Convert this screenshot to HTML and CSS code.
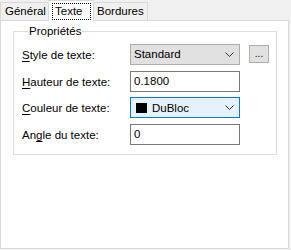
FILE: index.html
```html
<!DOCTYPE html>
<html lang="fr">
<head>
<meta charset="utf-8">
<link rel="stylesheet" href="styles.css">
</head>
<body>
<div class="tabs">
  <div class="tab first">Général</div>
  <div class="tab active"><span class="focus">Texte</span></div>
  <div class="tab last">Bordures</div>
</div>
<div class="panel">
  <fieldset class="group">
    <legend>Propriétés</legend>
    <div class="form">
      <label class="lbl r1"><u>S</u>tyle de texte:</label>
      <div class="ctl r1">
        <div class="combo"><span>Standard</span><svg class="chev" width="9" height="5" viewBox="0 0 9 5"><path d="M0.5 0.5 L4.5 4.5 L8.5 0.5" fill="none" stroke="#333" stroke-width="1"/></svg></div>
        <div class="btn">...</div>
      </div>
      <label class="lbl r2"><u>H</u>auteur de texte:</label>
      <div class="ctl r2"><div class="text">0.1800</div></div>
      <label class="lbl r3"><u>C</u>ouleur de texte:</label>
      <div class="ctl r3">
        <div class="combo focused"><span class="sw"></span><span>DuBloc</span><svg class="chev" width="9" height="5" viewBox="0 0 9 5"><path d="M0.5 0.5 L4.5 4.5 L8.5 0.5" fill="none" stroke="#333" stroke-width="1"/></svg></div>
      </div>
      <label class="lbl r4">An<u>g</u>le du texte:</label>
      <div class="ctl r4"><div class="text">0</div></div>
    </div>
  </fieldset>
</div>
</body>
</html>
```

FILE: styles.css
```css
* { box-sizing: border-box; }
html, body { margin: 0; padding: 0; }
body {
  width: 291px;
  height: 250px;
  background: #f0f0f0;
  font-family: "Liberation Sans", Arial, sans-serif;
  font-size: 11.5px;
  color: #000;
  overflow: hidden;
}
u { text-decoration-skip-ink: none; text-underline-offset: 2px; }
.tabs {
  display: flex;
  align-items: flex-end;
  height: 20px;
  position: relative;
  z-index: 1;
}
.tab {
  height: 18px;
  border: 1px solid #d9d9d9;
  border-bottom: none;
  background: #f0f0f0;
  line-height: 16px;
  margin-right: -1px;
  white-space: nowrap;
}
.tab.first { width: 49px; padding-left: 4px; }
.tab.active {
  height: 21px;
  margin-bottom: -1px;
  background: #fff;
  padding: 2px 2px 0 3px;
  width: 46px;
  position: relative;
}
.focus {
  display: block;
  border: 1px dotted #000;
  line-height: 14px;
  height: 17px;
  padding-left: 2px;
}
.tab.last { padding: 0 3px 0 3px; }
.panel {
  width: 289px;
  height: 229px;
  background: #fff;
  border: 1px solid #d9d9d9;
  padding: 3px 11px 0 12px;
}
.group {
  margin: 0;
  border: 1px solid #dcdcdc;
  padding: 6px 0 10px 8px;
  width: 264px;
  min-width: 0;
}
.group legend {
  padding: 0 1px;
  margin-left: 6px;
  line-height: 14px;
}
.form {
  display: grid;
  grid-template-columns: 108px 1fr;
  grid-template-rows: 21px 20px 21px 20px;
  row-gap: 6px;
}
.lbl { display: flex; align-items: center; padding-top: 1px; }
.ctl { display: flex; align-items: center; gap: 9px; }
.r1 { margin-bottom: 1px; }
.combo {
  width: 110px;
  height: 21px;
  background: #e1e1e1;
  border: 1px solid #adadad;
  display: flex;
  align-items: center;
  padding-left: 3px;
}
.combo span { flex: 1; }
.combo .chev { margin-right: 5px; }
.combo.focused {
  background: #e5f1fb;
  border-color: #0078d7;
}
.combo .sw {
  flex: none;
  width: 11px;
  height: 10px;
  background: #000;
  margin: 0 5px 0 2px;
}
.btn {
  width: 20px;
  height: 18px;
  background: #e1e1e1;
  border: 1px solid #adadad;
  display: flex;
  justify-content: center;
  align-items: flex-end;
  font-size: 10px;
  line-height: 12px;
  padding-bottom: 2px;
}
.text {
  width: 110px;
  height: 21px;
  border: 1px solid #7a7a7a;
  background: #fff;
  padding-left: 3px;
  display: flex;
  align-items: center;
}
```
